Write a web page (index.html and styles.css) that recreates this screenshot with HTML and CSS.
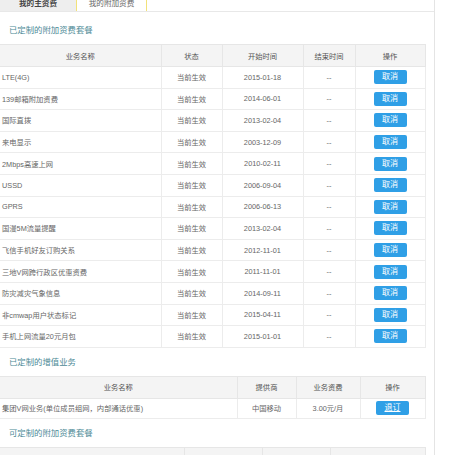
FILE: index.html
```html
<!DOCTYPE html>
<html lang="zh-CN">
<head>
<meta charset="utf-8">
<title>我的附加资费</title>
<link rel="stylesheet" href="styles.css">
</head>
<body>
<div class="page">
  <div class="tabs">
    <div class="tab tab-main">我的主资费</div>
    <div class="tab tab-active">我的附加资费</div>
  </div>

  <div class="section-title">已定制的附加资费套餐</div>
  <table class="grid grid-a">
    <colgroup>
      <col class="a1"><col class="a2"><col class="a3"><col class="a4"><col class="a5">
    </colgroup>
    <thead>
      <tr><th>业务名称</th><th>状态</th><th>开始时间</th><th>结束时间</th><th>操作</th></tr>
    </thead>
    <tbody>
      <tr><td class="name">LTE(4G)</td><td>当前生效</td><td>2015-01-18</td><td>--</td><td><span class="btn">取消</span></td></tr>
      <tr><td class="name">139邮箱附加资费</td><td>当前生效</td><td>2014-06-01</td><td>--</td><td><span class="btn">取消</span></td></tr>
      <tr><td class="name">国际直拨</td><td>当前生效</td><td>2013-02-04</td><td>--</td><td><span class="btn">取消</span></td></tr>
      <tr><td class="name">来电显示</td><td>当前生效</td><td>2003-12-09</td><td>--</td><td><span class="btn">取消</span></td></tr>
      <tr><td class="name">2Mbps高速上网</td><td>当前生效</td><td>2010-02-11</td><td>--</td><td><span class="btn">取消</span></td></tr>
      <tr><td class="name">USSD</td><td>当前生效</td><td>2006-09-04</td><td>--</td><td><span class="btn">取消</span></td></tr>
      <tr><td class="name">GPRS</td><td>当前生效</td><td>2006-06-13</td><td>--</td><td><span class="btn">取消</span></td></tr>
      <tr><td class="name">国漫5M流量提醒</td><td>当前生效</td><td>2013-02-04</td><td>--</td><td><span class="btn">取消</span></td></tr>
      <tr><td class="name">飞信手机好友订购关系</td><td>当前生效</td><td>2012-11-01</td><td>--</td><td><span class="btn">取消</span></td></tr>
      <tr><td class="name">三地V网跨行政区优惠资费</td><td>当前生效</td><td>2011-11-01</td><td>--</td><td><span class="btn">取消</span></td></tr>
      <tr><td class="name">防灾减灾气象信息</td><td>当前生效</td><td>2014-09-11</td><td>--</td><td><span class="btn">取消</span></td></tr>
      <tr><td class="name">非cmwap用户状态标记</td><td>当前生效</td><td>2015-04-11</td><td>--</td><td><span class="btn">取消</span></td></tr>
      <tr><td class="name">手机上网流量20元月包</td><td>当前生效</td><td>2015-01-01</td><td>--</td><td><span class="btn">取消</span></td></tr>
    </tbody>
  </table>

  <div class="section-title">已定制的增值业务</div>
  <table class="grid grid-b">
    <colgroup>
      <col class="b1"><col class="b2"><col class="b3"><col class="b4">
    </colgroup>
    <thead>
      <tr><th>业务名称</th><th>提供商</th><th>业务资费</th><th>操作</th></tr>
    </thead>
    <tbody>
      <tr><td class="name">集团V网业务(单位成员组网，内部通话优惠)</td><td>中国移动</td><td>3.00元/月</td><td><span class="btn btn-link">退订</span></td></tr>
    </tbody>
  </table>

  <div class="section-title">可定制的附加资费套餐</div>
  <table class="grid grid-c">
    <colgroup>
      <col class="c1"><col class="c2"><col class="c3"><col class="c4">
    </colgroup>
    <thead>
      <tr><th>业务名称</th><th>资费</th><th>状态</th><th>操作</th></tr>
    </thead>
  </table>
</div>
</body>
</html>
```

FILE: styles.css
```css
html, body {
  margin: 0;
  padding: 0;
  background: #fff;
}
body {
  font-family: "Liberation Sans", "Noto Sans CJK SC", sans-serif;
  color: #666;
}
.page {
  width: 435px;
  border-right: 1px solid #e4e4e4;
  box-sizing: border-box;
  min-height: 470px;
}
.tabs {
  display: flex;
  height: 11px;
  border-bottom: 1px solid #e8e8e8;
  margin-bottom: 4px;
}
.tab {
  height: 11px;
  font-size: 7.6px;
  line-height: 8px;
  text-align: center;
  box-sizing: border-box;
}
.tab-main {
  width: 76px;
  background: #eeeeee;
  color: #444;
  font-weight: bold;
}
.tab-active {
  width: 71px;
  background: #fff;
  color: #666;
  border-left: 1px solid #f2e27a;
  border-right: 1px solid #f2e27a;
}
.section-title {
  height: 28px;
  line-height: 28px;
  padding-left: 9px;
  font-size: 8.4px;
  color: #4d8a96;
}
.grid {
  width: 425px;
  border-collapse: collapse;
  table-layout: fixed;
  font-size: 7.3px;
}
.grid th {
  height: 21px;
  padding: 0;
  background: #f4f4f4;
  color: #555;
  font-weight: normal;
  border: 1px solid #e6e6e6;
  text-align: center;
}
.grid td {
  height: 20.6px;
  padding: 0;
  border: 1px solid #ececec;
  text-align: center;
  color: #666;
}
.grid td.name {
  text-align: left;
  padding-left: 2px;
}
.grid tr > *:first-child { border-left: none; }
.a1 { width: 161px; }
.a2 { width: 61px; }
.a3 { width: 81px; }
.a4 { width: 52px; }
.a5 { width: 70px; }
.b1 { width: 237px; }
.b2 { width: 59px; }
.b3 { width: 64px; }
.b4 { width: 65px; }
.c1 { width: 184px; }
.c2 { width: 78px; }
.c3 { width: 68px; }
.c4 { width: 95px; }
.btn {
  display: inline-block;
  width: 33px;
  height: 14px;
  line-height: 14px;
  border-radius: 2px;
  background: #2f9fe6;
  color: #fff;
  font-size: 8px;
  text-align: center;
  vertical-align: middle;
}
.btn-link {
  text-decoration: underline;
}
.grid-b td { height: 19.5px; }
.grid-c th { height: 26px; }
```
